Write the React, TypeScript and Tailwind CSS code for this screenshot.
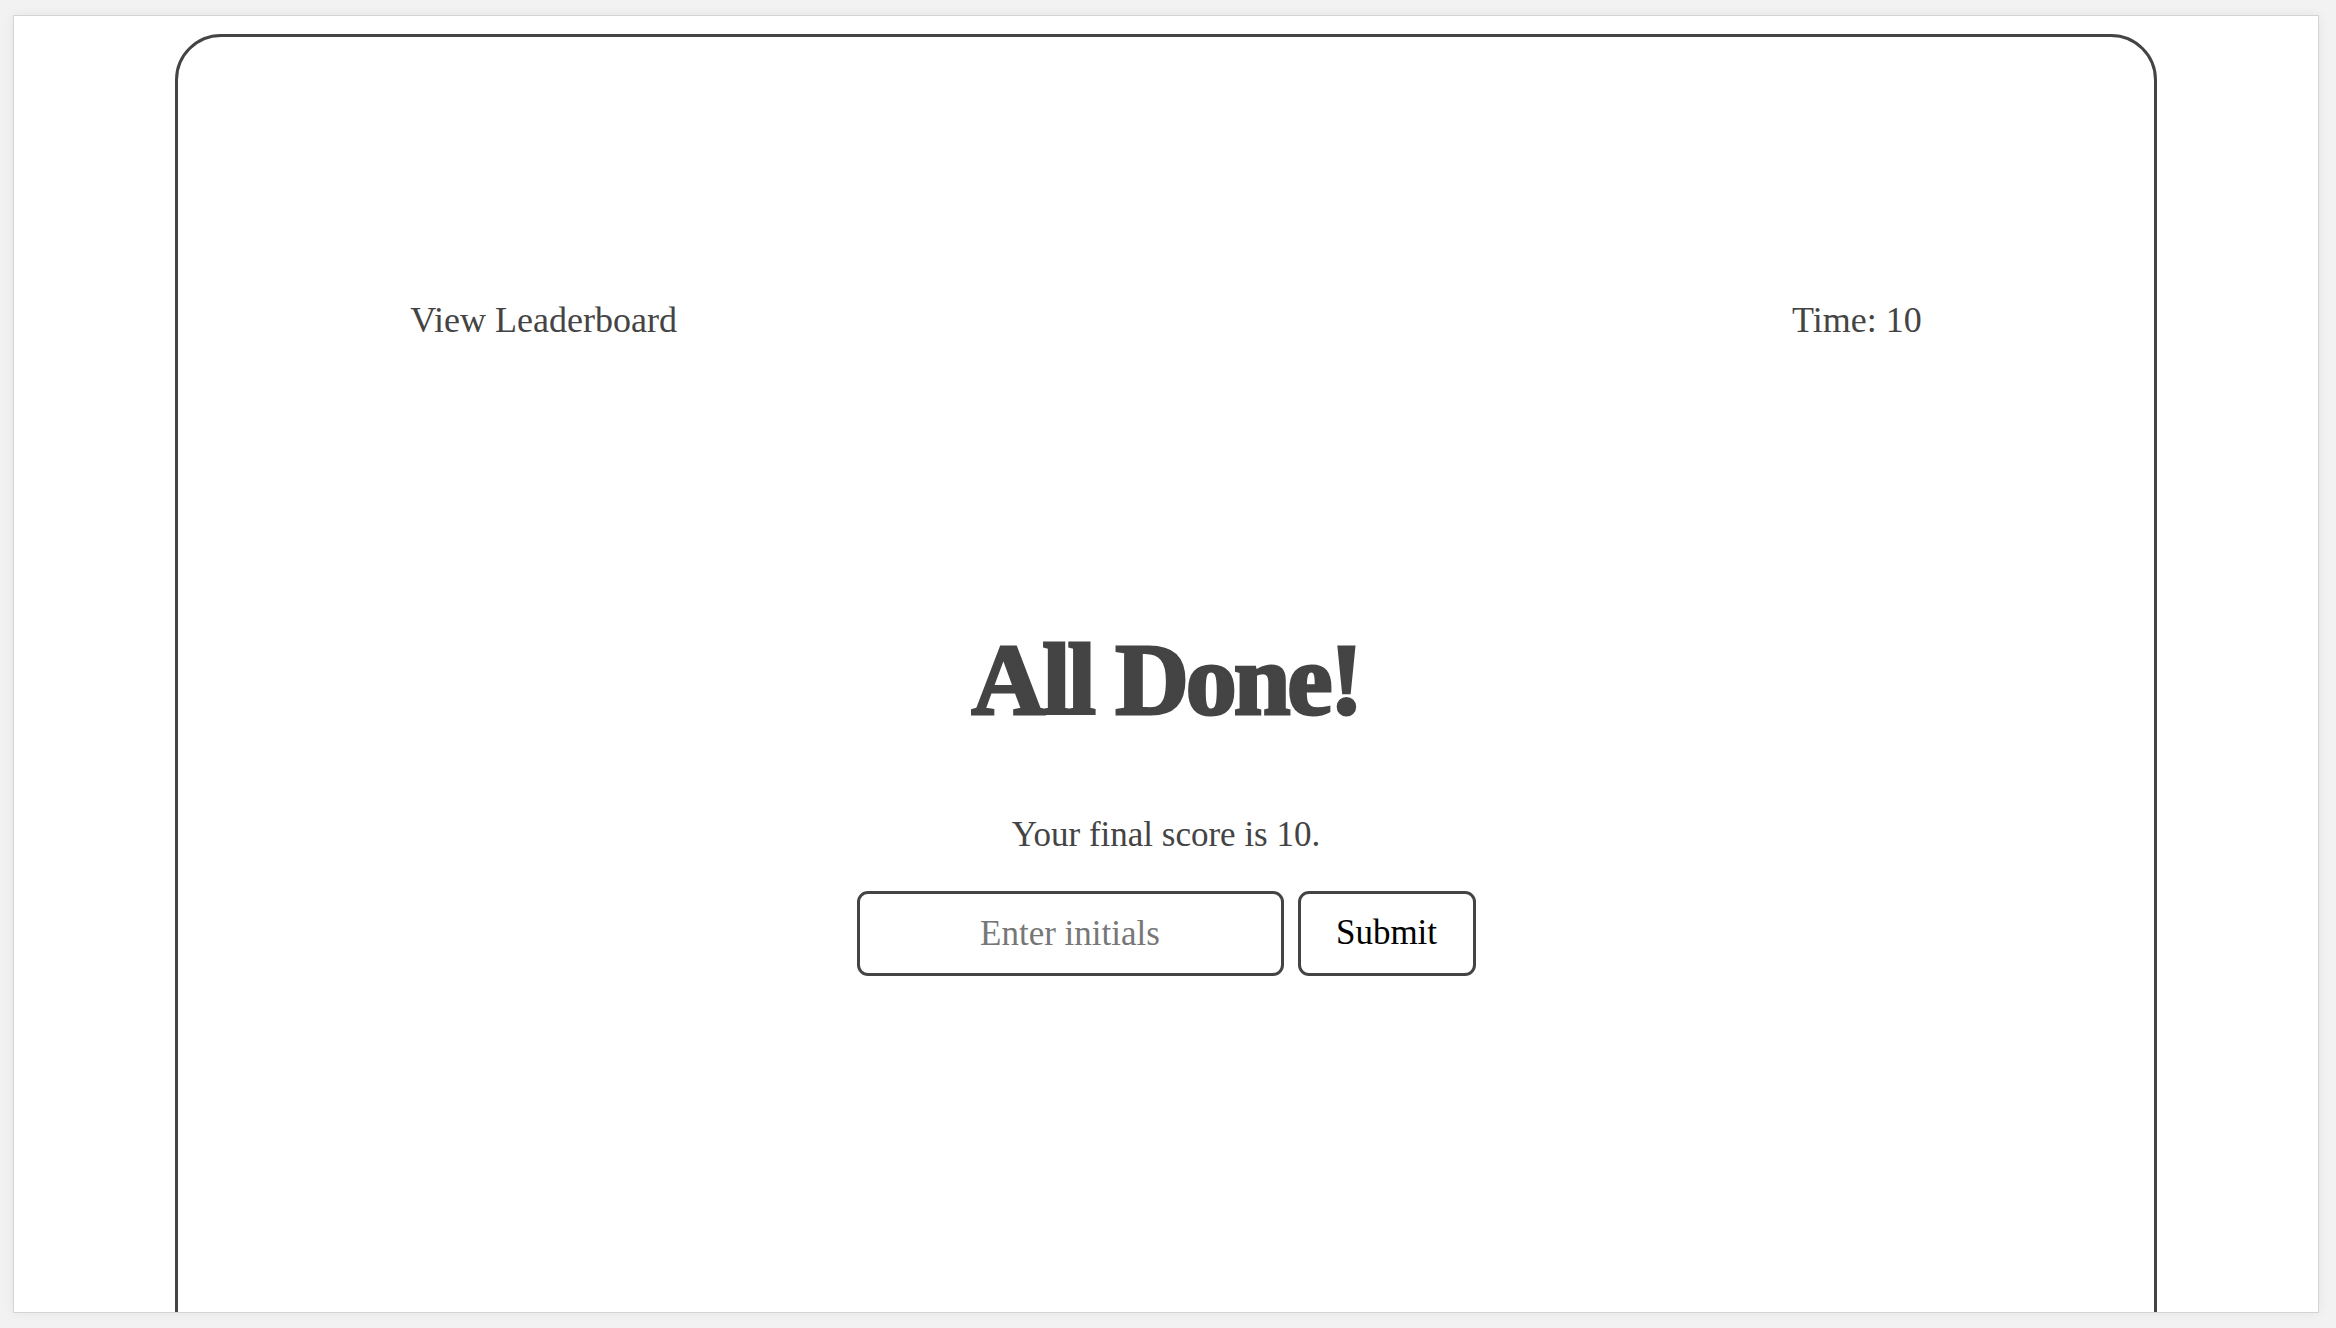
import React from 'react';

export default function App() {
  return (
    <div className="h-[1328px] bg-[#f2f2f2] pt-[15px] pl-[13px] pr-[17px] pb-[15px] font-['Liberation_Serif',serif] text-[#444]">
      <div className="h-full bg-white border border-[#d4d4d4] shadow-[0_0_12px_rgba(0,0,0,0.06)] overflow-hidden pt-[18px]">
        <main className="mx-auto w-[86%] h-[1400px] border-[3px] border-[#444] rounded-[46px] pt-[257px]">
          <header className="flex justify-between px-[232px] text-[36px] leading-[52px]">
            <a href="#" className="text-[#444]">View Leaderboard</a>
            <span>Time: 10</span>
          </header>

          <section className="flex flex-col items-center">
            <h1 className="mt-[283px] text-[102px] leading-none font-bold tracking-[-0.03em] [-webkit-text-stroke:3px_#444]">
              All Done!
            </h1>
            <p className="mt-[78px] text-[35px] leading-[52px]">Your final score is 10.</p>
            <form className="mt-[30px] flex gap-[14px]" onSubmit={(e) => e.preventDefault()}>
              <input
                type="text"
                placeholder="Enter initials"
                className="w-[427px] h-[85px] border-[3px] border-[#444] rounded-[11px] text-center text-[35px] text-black placeholder:text-[#777] outline-none font-['Liberation_Serif',serif]"
              />
              <button
                type="submit"
                className="w-[178px] h-[85px] border-[3px] border-[#444] rounded-[11px] bg-white text-black text-[35px] font-['Liberation_Serif',serif]"
              >
                Submit
              </button>
            </form>
          </section>
        </main>
      </div>
    </div>
  );
}
